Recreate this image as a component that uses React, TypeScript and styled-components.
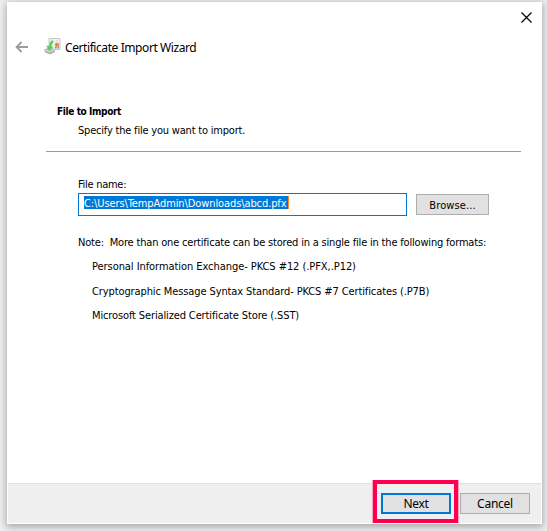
import React from "react";
import styled, { createGlobalStyle } from "styled-components";

const GlobalStyle = createGlobalStyle`
  * { box-sizing: border-box; }
  body { margin: 0; background: #dedede; }
`;

const Backdrop = styled.div`
  width: 547px;
  height: 531px;
  padding: 2px 5px 7px 7px;
  overflow: hidden;
  background: #efefef;
  font-family: "DejaVu Sans Condensed", "DejaVu Sans", sans-serif;
  font-stretch: condensed;
  font-size: 11px;
  color: #000;
`;

const Dialog = styled.main`
  display: flex;
  flex-direction: column;
  width: 535px;
  height: 522px;
  border: 1px solid #fff;
  background: #fff;
  box-shadow: 0 2px 7px 1px rgba(0, 0, 0, 0.3);
`;

const TitleBar = styled.div`
  display: flex;
  justify-content: flex-end;
  height: 34px;
  padding: 9px 9px 0 0;
`;

const WizardHeader = styled.header`
  display: flex;
  height: 56px;
  padding-left: 7px;
`;

const BackIcon = styled.svg`
  width: 14px;
  height: 12px;
  margin-top: 4px;
`;

const CertIcon = styled.svg`
  width: 17px;
  height: 17px;
  margin: 1px 4px 0 15px;
`;

const Label = styled.span<{ $spacing?: number }>`
  display: block;
  height: 16px;
  line-height: 16px;
  white-space: pre;
  letter-spacing: ${({ $spacing = 0 }) => $spacing}px;
`;

const Title = styled(Label)`
  margin-top: 3px;
  font-family: "Noto Sans", sans-serif;
  font-size: 12px;
`;

const Content = styled.section`
  flex: 1;
  padding: 11px 20px 0 38px;
`;

const Intro = styled.div`
  height: 48px;
  padding: 0 0 0 11px;
  border-bottom: 1px solid #9c9c9f;
`;

const Heading = styled(Label)`
  font-weight: bold;
  font-size: 10px;
`;

const Hint = styled(Label)`
  margin: 3px 0 0 21px;
`;

const Form = styled.div`
  padding: 25px 0 0 32px;
`;

const FieldRow = styled.div`
  display: flex;
  align-items: center;
  gap: 9px;
`;

const FileField = styled.div`
  width: 329px;
  height: 23px;
  padding: 2px 5px;
  border: 1px solid #0078d7;
`;

const Selection = styled.span<{ $spacing: number }>`
  display: block;
  width: 205px;
  height: 13px;
  border-right: 1px solid #ff8728;
  background: #0078d7;
  color: #fff;
  line-height: 15px;
  white-space: pre;
  letter-spacing: ${({ $spacing }) => $spacing}px;
`;

const Button = styled.button<{ $width?: number; $primary?: boolean; $spacing?: number }>`
  display: flex;
  align-items: center;
  justify-content: center;
  width: ${({ $width = 70 }) => $width}px;
  height: 21px;
  padding: 2px 0 0;
  border: ${({ $primary }) => ($primary ? "2px solid #0078d7" : "1px solid #adadad")};
  border-radius: 0;
  background: #e1e1e1;
  color: #000;
  font: inherit;
  letter-spacing: ${({ $spacing = 0 }) => $spacing}px;
`;

const DialogButton = styled(Button)`
  padding: 0;
  font-family: "Noto Sans", sans-serif;
  font-size: 12px;
`;

const Note = styled(Label)`
  margin-top: 19px;
`;

const Formats = styled.ul`
  display: grid;
  grid-template-rows: 25px 24px 16px;
  margin: 8px 0 0 14px;
  padding: 0;
  list-style: none;
`;

const Footer = styled.footer`
  display: flex;
  gap: 2px;
  height: 40px;
  padding-left: 365px;
  border-top: 1px solid #dfdfdf;
  background: #efefef;
`;

const Highlight = styled.div`
  display: flex;
  width: 85px;
  height: 43px;
  margin-top: -4px;
  padding: 9px 0 0 4px;
  border: 4px solid #ff0050;
  box-shadow: -1px 0 #f9a0bb, 1px 0 #f9a0bb;
`;

const CancelSlot = styled.div`
  padding-top: 9px;
`;

const formats = [
  { text: "Personal Information Exchange- PKCS #12 (.PFX,.P12)", spacing: -0.06 },
  { text: "Cryptographic Message Syntax Standard- PKCS #7 Certificates (.P7B)", spacing: -0.11 },
  { text: "Microsoft Serialized Certificate Store (.SST)", spacing: -0.13 },
];

export default function App() {
  return (
    <>
      <GlobalStyle />
      <Backdrop>
        <Dialog>
          <TitleBar>
            <svg width="11" height="11" viewBox="0 0 11 11" aria-label="Close">
              <path d="M.5.5l10 10M10.5.5l-10 10" stroke="#000" strokeWidth="1.2" />
            </svg>
          </TitleBar>
          <WizardHeader>
            <BackIcon viewBox="0 0 14 12" fill="none" stroke="#9b99a1" strokeWidth="1.8">
              <path d="M13 6H2M6.5 1L1.6 6l4.9 5" />
            </BackIcon>
            <CertIcon viewBox="0 0 17 17">
              <path d="M5 .5h11v11H5z" fill="#eef0ef" stroke="#c5c8c8" />
              <path d="M7 3h3M12 3h2" stroke="#cfd3d5" />
              <path d="M0 11.500l5-2 6 1.500v3L6 16.500l-5-2z" fill="#b1b5b2" />
              <path d="M1 12l5 1.500 5-2" fill="none" stroke="#e1e4e2" />
              <path d="M8.500 2.500C6 3 5.200 6 5.200 8L2.500 7.500l2 5 5-3.500L7.500 8.500c0-2 .5-3 2-4z" fill="#55cf55" />
              <path d="M11 8.500h1.600v2H11zM13.600 8.500h1.500v2h-1.500z" fill="#4b9ad8" />
              <circle cx="13" cy="6.800" r="2.100" fill="#f08a24" />
            </CertIcon>
            <Title $spacing={-0.42}>Certificate Import Wizard</Title>
          </WizardHeader>
          <Content>
            <Intro>
              <Heading $spacing={-0.38}>File to Import</Heading>
              <Hint $spacing={-0.2}>Specify the file you want to import.</Hint>
            </Intro>
            <Form>
              <Label $spacing={-0.28}>File name:</Label>
              <FieldRow>
                <FileField>
                  <Selection $spacing={-0.1}>{"C:\\Users\\TempAdmin\\Downloads\\abcd.pfx"}</Selection>
                </FileField>
                <Button $width={73} $spacing={0.1}>Browse...</Button>
              </FieldRow>
              <Note $spacing={-0.185}>{"Note:  More than one certificate can be stored in a single file in the following formats:"}</Note>
              <Formats>
                {formats.map((f) => (
                  <li key={f.text}>
                    <Label $spacing={f.spacing}>{f.text}</Label>
                  </li>
                ))}
              </Formats>
            </Form>
          </Content>
          <Footer>
            <Highlight>
              <DialogButton $primary $spacing={-0.3}>Next</DialogButton>
            </Highlight>
            <CancelSlot>
              <DialogButton $spacing={-0.25}>Cancel</DialogButton>
            </CancelSlot>
          </Footer>
        </Dialog>
      </Backdrop>
    </>
  );
}
